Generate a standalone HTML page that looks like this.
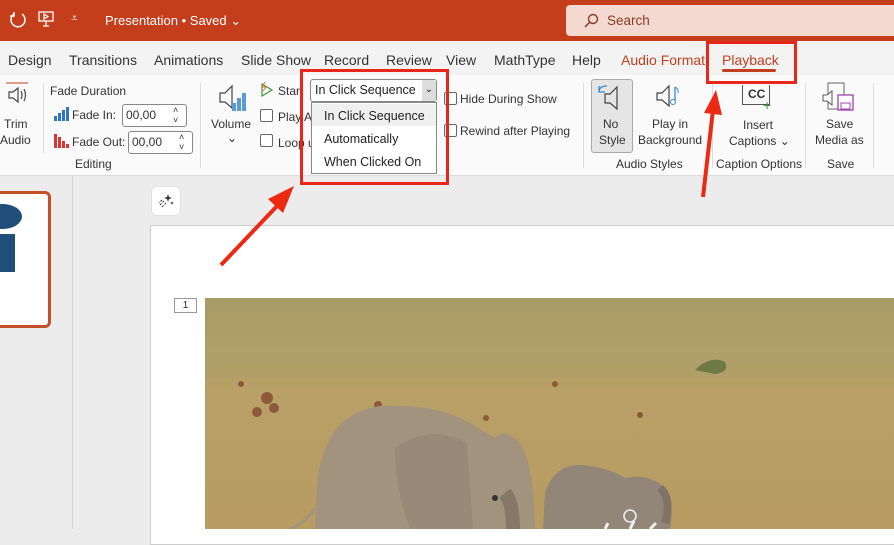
<!DOCTYPE html>
<html><head><meta charset="utf-8"><style>
*{margin:0;padding:0;box-sizing:border-box}
body{width:894px;height:529px;overflow:hidden;font-family:"Liberation Sans",sans-serif;background:#ececec;position:relative;color:#222}
.a{position:absolute;white-space:nowrap}
.title{left:0;top:0;width:894px;height:41px;background:#c43e1c;color:#fff;font-size:13px}
.tabs{left:0;top:41px;width:894px;height:34px;background:#f3f3f3;font-size:14px;color:#333}
.rib{left:0;top:75px;width:894px;height:101px;background:#fafafa;border-bottom:1px solid #ddd;font-size:12px;color:#333}
.sep{position:absolute;width:1px;background:#ddd}
.cb{position:absolute;width:13px;height:13px;border:1px solid #666;border-radius:2px;background:#fff}
.red{position:absolute;border:3px solid #e8261a}
</style></head><body>
<div class="a title">
 <svg class="a" style="left:8px;top:10px" width="20" height="20" viewBox="0 0 20 20"><path d="M6 4A7 7 0 1 0 14 4" fill="none" stroke="#fff" stroke-width="1.5"/><path d="M6 2v4H2" fill="none" stroke="#fff" stroke-width="1.5"/></svg>
 <svg class="a" style="left:38px;top:11px" width="16" height="16" viewBox="0 0 16 16"><rect x="1" y="1" width="14" height="9" fill="none" stroke="#fff" stroke-width="1.3"/><path d="M6 3l4 2.5L6 8z M8 10v5 M5 15h6" fill="none" stroke="#fff" stroke-width="1.3"/></svg>
 <div class="a" style="left:71px;top:11px;font-size:12px">⩡</div>
 <div class="a" style="left:105px;top:13px">Presentation • Saved ⌄</div>
 <div class="a" style="left:566px;top:5px;width:340px;height:31px;background:#f4d9d1;border-radius:4px;color:#8a3a22;font-size:13.5px">
  <svg class="a" style="left:17px;top:8px" width="16" height="16" viewBox="0 0 16 16"><circle cx="10" cy="6" r="4.5" fill="none" stroke="#8a3a22" stroke-width="1.4"/><path d="M7 9L2 14" stroke="#8a3a22" stroke-width="1.5"/></svg>
  <span class="a" style="left:41px;top:8px">Search</span></div>
</div>
<div class="a tabs">
 <span class="a" style="left:8px;top:11px">Design</span>
 <span class="a" style="left:69px;top:11px">Transitions</span>
 <span class="a" style="left:154px;top:11px">Animations</span>
 <span class="a" style="left:241px;top:11px">Slide Show</span>
 <span class="a" style="left:324px;top:11px">Record</span>
 <span class="a" style="left:386px;top:11px">Review</span>
 <span class="a" style="left:446px;top:11px">View</span>
 <span class="a" style="left:494px;top:11px">MathType</span>
 <span class="a" style="left:572px;top:11px">Help</span>
 <span class="a" style="left:621px;top:11px;color:#c43e1c">Audio Format</span>
 <span class="a" style="left:722px;top:11px;color:#c43e1c">Playback</span>
 <div class="a" style="left:722px;top:28px;width:54px;height:3px;background:#c43e1c;border-radius:2px"></div>
</div>
<div class="a rib">
 <svg class="a" style="left:5px;top:5px" width="24" height="26" viewBox="0 0 24 26"><path d="M1 3h22" stroke="#c43e1c"/><path d="M4 12h4l5-4v14l-5-4H4z M16 11q2 4 0 8 M19 9q3 6 0 12" fill="none" stroke="#444" stroke-width="1.2"/></svg>
 <span class="a" style="left:4px;top:42px">Trim</span><span class="a" style="left:0px;top:58px">Audio</span>
 <div class="sep" style="left:43px;top:8px;height:70px"></div>
 <span class="a" style="left:50px;top:9px">Fade Duration</span>
 <svg class="a" style="left:53px;top:31px" width="16" height="16"><rect x="1" y="10" width="3" height="5" fill="#2e75c6"/><rect x="5" y="7" width="3" height="8" fill="#2e75c6"/><rect x="9" y="4" width="3" height="11" fill="#2e75c6"/><rect x="13" y="1" width="3" height="14" fill="#2e75c6"/></svg>
 <span class="a" style="left:72px;top:33px">Fade In:</span>
 <div class="a" style="left:122px;top:29px;width:65px;height:23px;border:1px solid #888;border-radius:3px;background:#fff;font-size:12px;padding:3px 3px">00,00<span class="a" style="left:50px;top:0;font-size:9px">˄<br>˅</span></div>
 <svg class="a" style="left:53px;top:58px" width="16" height="16"><rect x="1" y="1" width="3" height="14" fill="#d33"/><rect x="5" y="4" width="3" height="11" fill="#d33"/><rect x="9" y="8" width="3" height="7" fill="#d33"/><rect x="13" y="11" width="3" height="4" fill="#d33"/></svg>
 <span class="a" style="left:72px;top:60px">Fade Out:</span>
 <div class="a" style="left:128px;top:56px;width:65px;height:23px;border:1px solid #888;border-radius:3px;background:#fff;font-size:12px;padding:3px 3px">00,00<span class="a" style="left:50px;top:0;font-size:9px">˄<br>˅</span></div>
 <span class="a" style="left:75px;top:82px">Editing</span>
 <div class="sep" style="left:200px;top:8px;height:85px"></div>
 <svg class="a" style="left:218px;top:8px" width="32" height="30" viewBox="0 0 32 30"><path d="M2 10h5l7-7v22l-7-6H2z" fill="none" stroke="#444" stroke-width="1.2"/><rect x="14" y="20" width="4" height="8" fill="#5b9bd5"/><rect x="19" y="15" width="4" height="13" fill="#5b9bd5"/><rect x="24" y="10" width="4" height="18" fill="#5b9bd5"/></svg>
 <span class="a" style="left:211px;top:42px">Volume</span><span class="a" style="left:227px;top:56px">⌄</span>
 <svg class="a" style="left:259px;top:6px" width="16" height="16"><path d="M3 3l10 6-10 6z" fill="none" stroke="#3a9a3a" stroke-width="1.2"/><path d="M6 1l-3 5h4l-3 4" stroke="#e07030" fill="none"/></svg>
 <span class="a" style="left:278px;top:9px">Start</span>
 <div class="cb" style="left:260px;top:34px"></div><span class="a" style="left:278px;top:35px">Play A</span>
 <div class="cb" style="left:260px;top:59px"></div><span class="a" style="left:278px;top:61px">Loop u</span>
 <div class="cb" style="left:444px;top:17px"></div><span class="a" style="left:460px;top:17px">Hide During Show</span>
 <div class="cb" style="left:444px;top:49px"></div><span class="a" style="left:460px;top:49px">Rewind after Playing</span>
 <div class="sep" style="left:583px;top:8px;height:85px"></div>
 <div class="a" style="left:591px;top:4px;width:42px;height:74px;background:#e5e5e5;border:1px solid #aaa;border-radius:3px"></div>
 <svg class="a" style="left:595px;top:7px" width="30" height="30" viewBox="0 0 30 30"><path d="M10 12h5l7-7v22l-7-6h-5z" fill="none" stroke="#444" stroke-width="1.2"/><path d="M4 10q0-6 8-6 M4 4v6h6" fill="none" stroke="#3a8ad0" stroke-width="1.3"/></svg>
 <span class="a" style="left:603px;top:42px">No</span><span class="a" style="left:599px;top:58px">Style</span>
 <svg class="a" style="left:656px;top:8px" width="26" height="28" viewBox="0 0 26 28"><path d="M1 10h5l7-7v20l-7-6H1z" fill="none" stroke="#444" stroke-width="1.2"/><path d="M19 4v14" stroke="#3a8ad0" stroke-width="1.3"/><circle cx="17" cy="19" r="2.5" fill="none" stroke="#3a8ad0"/><path d="M19 4q4 2 3 6" fill="none" stroke="#3a8ad0"/></svg>
 <span class="a" style="left:652px;top:42px">Play in</span><span class="a" style="left:638px;top:58px">Background</span>
 <span class="a" style="left:616px;top:82px">Audio Styles</span>
 <div class="sep" style="left:712px;top:8px;height:85px"></div>
 <div class="a" style="left:742px;top:10px;width:28px;height:20px;border:1px solid #555;border-top:none;font-size:12px;font-weight:bold;padding-left:5px;line-height:18px">CC</div>
 <span class="a" style="left:763px;top:22px;color:#3a9a3a;font-size:14px">+</span>
 <span class="a" style="left:743px;top:43px">Insert</span><span class="a" style="left:729px;top:59px">Captions ⌄</span>
 <span class="a" style="left:716px;top:82px">Caption Options</span>
 <div class="sep" style="left:805px;top:8px;height:85px"></div>
 <svg class="a" style="left:822px;top:6px" width="34" height="32" viewBox="0 0 34 32"><rect x="6" y="2" width="16" height="26" fill="none" stroke="#666"/><path d="M1 14h4l5-4v14l-5-4H1z" fill="#fff" stroke="#555"/><rect x="16" y="14" width="15" height="15" fill="#fff" stroke="#a040b0" stroke-width="1.3"/><rect x="19" y="22" width="9" height="6" fill="none" stroke="#a040b0"/></svg>
 <span class="a" style="left:826px;top:42px">Save</span><span class="a" style="left:815px;top:58px">Media as</span>
 <span class="a" style="left:827px;top:82px">Save</span>
 <div class="sep" style="left:873px;top:8px;height:85px"></div>
</div>
<!-- dropdown -->
<div class="a" style="left:310px;top:79px;width:127px;height:23px;border:1px solid #888;border-radius:3px;background:#fff;font-size:12.5px;padding:3px 4px">In Click Sequence<div class="a" style="right:0;top:0;width:14px;height:21px;background:#ddd;font-size:10px;text-align:center;line-height:19px">⌄</div></div>
<div class="a" style="left:311px;top:102px;width:126px;height:72px;border:1px solid #888;background:#fff;font-size:12.5px">
 <div class="a" style="left:0;top:1px;width:124px;height:22px;background:#f0f0f0"></div>
 <span class="a" style="left:12px;top:6px">In Click Sequence</span>
 <span class="a" style="left:12px;top:29px">Automatically</span>
 <span class="a" style="left:12px;top:52px">When Clicked On</span>
</div>
<div class="red" style="left:300px;top:69px;width:149px;height:116px"></div>
<div class="red" style="left:706px;top:41px;width:91px;height:43px"></div>
<!-- left panel -->
<div class="a" style="left:72px;top:176px;width:1px;height:353px;background:#d4d4d4"></div>
<div class="a" style="left:-10px;top:191px;width:61px;height:137px;border:3px solid #c4502a;border-radius:6px;background:#fff;overflow:hidden">
 <div class="a" style="left:-10px;top:10px;width:39px;height:25px;border-radius:50%;background:#1f4e79"></div>
 <div class="a" style="left:0;top:40px;width:22px;height:38px;background:#1f4e79"></div>
</div>
<div class="a" style="left:151px;top:186px;width:30px;height:30px;background:#fff;border-radius:6px;border:1px solid #e0e0e0"></div>
<svg class="a" style="left:157px;top:192px" width="18" height="18" viewBox="0 0 18 18"><path d="M11 2l1 3 3 1-3 1-1 3-1-3-3-1 3-1z M15 9l.5 1.5 1.5.5-1.5.5-.5 1.5-.5-1.5L13 11l1.5-.5z" fill="#333"/><path d="M7 9l-5 5 M9 11l-5 5 M5 8l-3 3" stroke="#333" stroke-width="1" stroke-dasharray="2 1.5"/></svg>
<div class="a" style="left:150px;top:225px;width:760px;height:320px;background:#fff;border:1px solid #ccc"></div>
<div class="a" style="left:174px;top:298px;width:23px;height:15px;border:1px solid #999;background:#fff;font-size:10px;text-align:center;line-height:13px">1</div>
<svg class="a" style="left:205px;top:298px" width="689" height="231" viewBox="0 0 689 231">
 <defs><linearGradient id="g" x1="0" y1="0" x2="0" y2="1"><stop offset="0" stop-color="#a89b68"/><stop offset="0.4" stop-color="#b8a066"/><stop offset="1" stop-color="#b89c62"/></linearGradient></defs>
 <rect width="689" height="231" fill="url(#g)"/>
 <rect y="40" width="689" height="40" fill="#aea06a" opacity="0.5"/>
 <g fill="#8c5a3a"><circle cx="62" cy="100" r="6"/><circle cx="52" cy="114" r="5"/><circle cx="69" cy="110" r="5"/><circle cx="36" cy="86" r="3"/><circle cx="173" cy="107" r="4"/><circle cx="281" cy="120" r="3"/><circle cx="350" cy="86" r="3"/><circle cx="435" cy="117" r="3"/></g>
 <path d="M490 72 q15-15 30-8 q5 10-10 12z" fill="#6e7a45"/>
 <!-- big elephant -->
 <path d="M110 231 L112 185 Q120 115 175 108 Q230 105 265 125 L290 140 Q300 130 315 145 Q330 170 330 231z" fill="#a2937f"/>
 <path d="M190 150 Q225 125 262 145 L268 231 L205 231 Q190 190 190 150z" fill="#988a78"/>
 <path d="M300 195 q8 10 8 36" fill="none" stroke="#857868" stroke-width="14"/>
 <circle cx="290" cy="200" r="3" fill="#333"/>
 <path d="M110 210 q-10 15 -25 21" fill="none" stroke="#a2937f" stroke-width="3"/>
 <!-- small elephant -->
 <path d="M338 231 L340 195 Q350 165 378 167 Q405 170 420 180 Q445 175 460 190 Q470 210 465 231z" fill="#928679"/>
 <path d="M455 190 q12 10 5 35" fill="none" stroke="#7e7366" stroke-width="8"/>
 <circle cx="425" cy="218" r="6" fill="none" stroke="#e8eef5" stroke-width="1.6"/>
 <path d="M400 231 l3-6 M425 231 l4-8 M445 231 l6-6" stroke="#eee" stroke-width="3"/>
</svg>
<!-- arrows -->
<svg class="a" style="left:0;top:0" width="894" height="529">
 <path d="M221 265 L278 205" stroke="#ec2a14" stroke-width="4"/><path d="M294 186 L268 199 L283 213z" fill="#ec2a14"/>
 <path d="M703 197 L713 110" stroke="#ec2a14" stroke-width="4"/><path d="M716 90 L704 113 L722 115z" fill="#ec2a14"/>
</svg>
</body></html>
